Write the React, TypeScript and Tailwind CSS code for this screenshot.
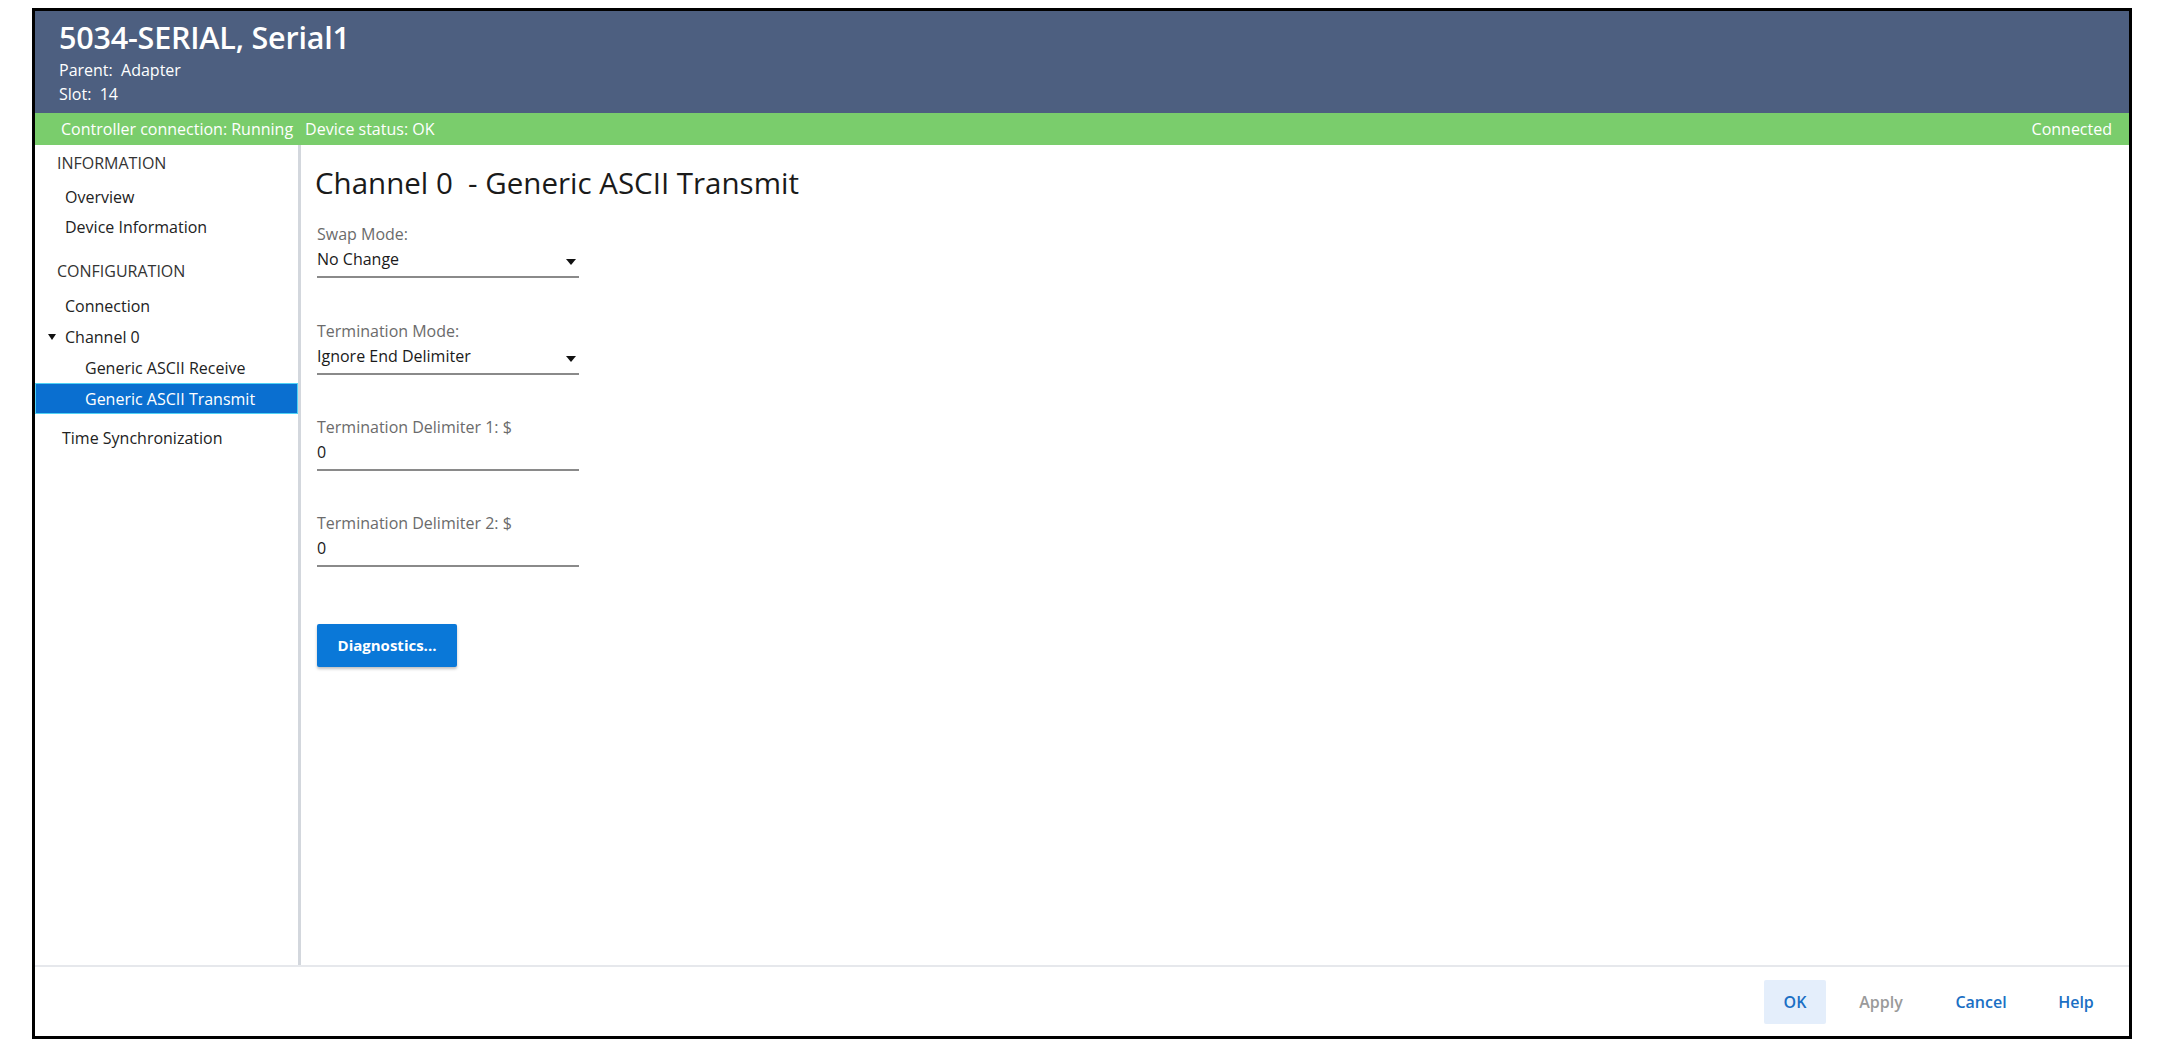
import React from "react";

const font = { fontFamily: '"Open Sans", "Noto Sans", sans-serif' };

function Field({ label, value, dropdown, mt }: { label: string; value: string; dropdown?: boolean; mt: string }) {
  return (
    <div className={`${mt} w-[262px] ml-[2px]`}>
      <div className="h-[22px] leading-[22px] text-[16px] text-[#6b6b6b]">{label}</div>
      <div className="mt-[2px] relative h-[24px] leading-[24px] text-[16px] text-[#1a1a1a] border-b-2 border-[#8a8a8a] box-content pb-[5px]">
        {value}
        {dropdown && (
          <svg className="absolute right-[3px] top-[12px]" width="10" height="6" viewBox="0 0 10 6">
            <path d="M0 0 L10 0 L5 6 Z" fill="#111" />
          </svg>
        )}
      </div>
    </div>
  );
}

export default function App() {
  return (
    <div className="w-[2164px] h-[1052px] bg-white" style={font}>
      <div className="ml-[32px] mt-[8px] w-[2100px] h-[1031px] border-[3px] border-black flex flex-col">
        {/* header */}
        <div className="h-[102px] bg-[#4d5f80] text-white pl-[24px] pt-[8px] shrink-0">
          <div className="h-[36px] leading-[36px] text-[30.5px] font-semibold tracking-[-0.2px]">5034-SERIAL, Serial1</div>
          <div className="mt-[5px] h-[20px] leading-[20px] text-[16px]">Parent:&nbsp; Adapter</div>
          <div className="mt-[4px] h-[20px] leading-[20px] text-[16px]">Slot:&nbsp; 14</div>
        </div>
        {/* status bar */}
        <div className="h-[32px] bg-[#7acd6c] text-white text-[16px] flex items-center pl-[26px] pr-[17px] shrink-0">
          <span>Controller connection: Running</span>
          <span className="ml-[12px]">Device status: OK</span>
          <span className="ml-auto">Connected</span>
        </div>
        {/* body */}
        <div className="flex flex-1 min-h-0 border-b-2 border-[#e6e8ec]">
          <div className="w-[266px] shrink-0 border-r-[3px] border-[#d3d7dd] text-[16px] text-[#222] pt-[3px]">
            <div className="h-[30px] flex items-center pl-[22px] text-[#333]">INFORMATION</div>
            <div className="mt-[4px] h-[30px] flex items-center pl-[30px]">Overview</div>
            <div className="h-[30px] flex items-center pl-[30px]">Device Information</div>
            <div className="mt-[14px] h-[30px] flex items-center pl-[22px] text-[#333]">CONFIGURATION</div>
            <div className="mt-[4px] h-[31px] flex items-center pl-[30px]">Connection</div>
            <div className="h-[31px] flex items-center pl-[13px]">
              <svg width="8" height="6" viewBox="0 0 8 6" className="mr-[9px]">
                <path d="M0 0 L8 0 L4 6 Z" fill="#111" />
              </svg>
              Channel 0
            </div>
            <div className="h-[31px] flex items-center pl-[50px]">Generic ASCII Receive</div>
            <div className="h-[31px] flex items-center pl-[49px] bg-[#0a6fd0] border border-[#4fd2f5] text-white">Generic ASCII Transmit</div>
            <div className="mt-[8px] h-[31px] flex items-center pl-[27px]">Time Synchronization</div>
          </div>
          <div className="flex-1 pl-[14px] pt-[21px]">
            <div className="h-[34px] leading-[34px] text-[29.5px] text-[#1a1a1a]">Channel 0&nbsp; - Generic ASCII Transmit</div>
            <Field mt="mt-[23px]" label="Swap Mode:" value="No Change" dropdown />
            <Field mt="mt-[42px]" label="Termination Mode:" value="Ignore End Delimiter" dropdown />
            <Field mt="mt-[41px]" label="Termination Delimiter 1: $" value="0" />
            <Field mt="mt-[41px]" label="Termination Delimiter 2: $" value="0" />
            <button className="mt-[57px] ml-[2px] w-[140px] h-[43px] bg-[#0a78d8] text-white text-[15px] font-bold rounded-[2px] shadow-[0_2px_3px_rgba(0,0,0,0.25)]">
              Diagnostics...
            </button>
          </div>
        </div>
        {/* footer */}
        <div className="h-[69px] shrink-0 flex items-center justify-end pr-[15px] gap-[12px] text-[16px] font-semibold">
          <button className="w-[62px] h-[44px] bg-[#e4eefb] rounded-[2px] text-[#1a6fc4]">OK</button>
          <button className="w-[86px] h-[44px] text-[#9a9a9a]">Apply</button>
          <button className="w-[90px] h-[44px] text-[#1a6fc4]">Cancel</button>
          <button className="w-[76px] h-[44px] text-[#1a6fc4]">Help</button>
        </div>
      </div>
    </div>
  );
}
